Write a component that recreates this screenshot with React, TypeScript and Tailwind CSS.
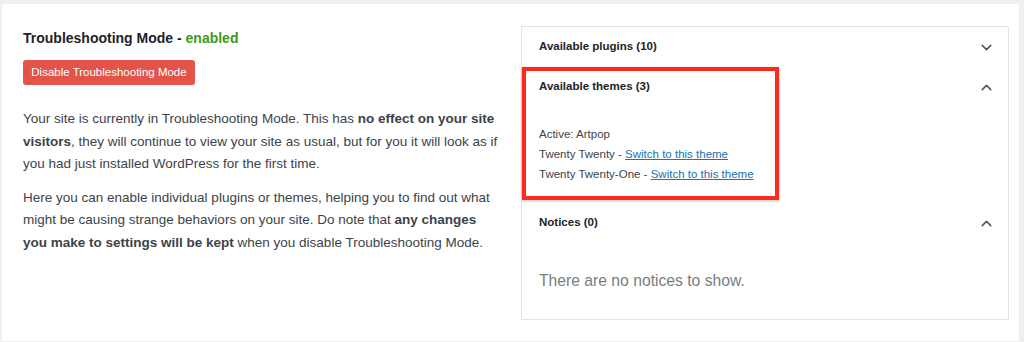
import { ChevronDown, ChevronUp } from 'lucide-react';

const font = { fontFamily: '"Liberation Sans", Arial, sans-serif' };

const Section = ({ title, open }: { title: string; open: boolean }) => (
    <div className="flex items-center justify-between h-[40px] pl-[17px] pr-[13px]">
        <h3 className="text-[11.5px] font-bold text-[#1d2327]">{title}</h3>
        {open ? (
            <ChevronUp className="w-[17px] h-[17px] text-[#50575e]" strokeWidth={2.2} />
        ) : (
            <ChevronDown className="w-[17px] h-[17px] text-[#50575e]" strokeWidth={2.2} />
        )}
    </div>
);

export default function App() {
    return (
        <div className="w-[1024px] h-[342px] bg-[#f0f0f0] pt-[4px] pl-[2px] pr-[5px] pb-[1px]" style={font}>
            <div className="flex h-full bg-white">
                {/* Left column */}
                <div className="w-[519px] shrink-0 pl-[21px] pt-[22px] pr-[20px]">
                    <h2 className="text-[14px] leading-[24px] font-bold text-[#1d2327]">
                        Troubleshooting Mode - <span className="text-[#3d9a1a]">enabled</span>
                    </h2>
                    <button className="mt-[10px] h-[25px] w-[172px] rounded-[3px] bg-[#e4534a] text-white text-[11.5px] whitespace-nowrap">
                        Disable Troubleshooting Mode
                    </button>
                    <div className="mt-[23px] text-[13.5px] leading-[22.5px] text-[#3c434a]">
                        <p>
                            Your site is currently in Troubleshooting Mode. This has{' '}
                            <strong className="font-bold">no effect on your site visitors</strong>, they will continue to
                            view your site as usual, but for you it will look as if you had just installed WordPress for the
                            first time.
                        </p>
                        <p className="mt-[11px]">
                            Here you can enable individual plugins or themes, helping you to find out what might be causing
                            strange behaviors on your site. Do note that{' '}
                            <strong className="font-bold">any changes you make to settings will be kept</strong> when you
                            disable Troubleshooting Mode.
                        </p>
                    </div>
                </div>

                {/* Right column */}
                <div className="pt-[22px]">
                    <div className="w-[488px] h-[294px] border border-[#e2e4e7]">
                        <Section title="Available plugins (10)" open={false} />
                        <div className="relative">
                            <Section title="Available themes (3)" open />
                            <ul className="pl-[17px] pt-[17px] pb-[17px] text-[11.5px] leading-[20px] text-[#3c434a]">
                                <li>Active: Artpop</li>
                                <li>
                                    Twenty Twenty -{' '}
                                    <a href="#" className="text-[#2271b1] underline">Switch to this theme</a>
                                </li>
                                <li>
                                    Twenty Twenty-One -{' '}
                                    <a href="#" className="text-[#2271b1] underline">Switch to this theme</a>
                                </li>
                            </ul>
                            {/* Highlight annotation */}
                            <div className="absolute left-[0px] top-[0px] w-[257px] h-[133px] border-[4px] border-[#fb2a1c] shadow-[0_1px_3px_rgba(0,0,0,0.25)]"></div>
                        </div>
                        <div className="pt-[2px]">
                            <Section title="Notices (0)" open />
                        </div>
                        <p className="pl-[17px] pt-[26px] text-[15.7px] text-[#787c82]">There are no notices to show.</p>
                    </div>
                </div>
            </div>
        </div>
    );
}
